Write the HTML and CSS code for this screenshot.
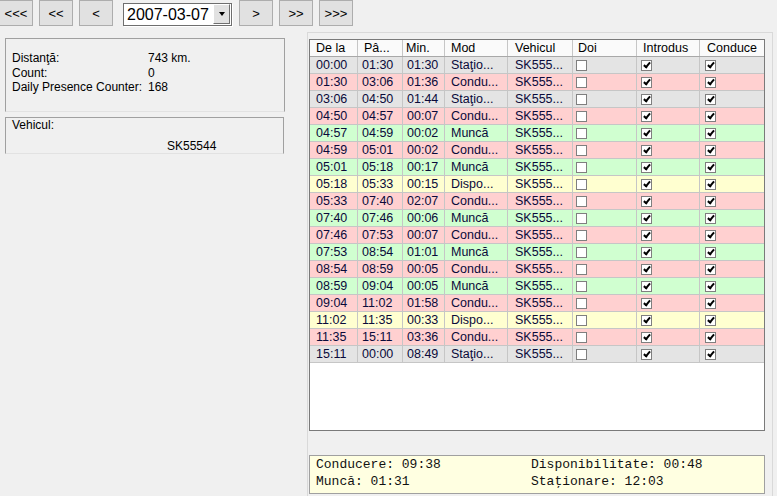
FILE: index.html
```html
<!DOCTYPE html>
<html>
<head>
<meta charset="utf-8">
<link rel="stylesheet" href="styles.css">
</head>
<body>
<div class="toolbar">
  <button class="nav first">&lt;&lt;&lt;</button>
  <button class="nav">&lt;&lt;</button>
  <button class="nav">&lt;</button>
  <div class="combo"><span class="combo-text">2007-03-07</span><span class="combo-btn"><span class="arrow"></span></span></div>
  <button class="nav">&gt;</button>
  <button class="nav">&gt;&gt;</button>
  <button class="nav">&gt;&gt;&gt;</button>
</div>
<div class="main">
  <div class="left">
    <div class="panel info">
      <span>Distanţă:</span><span>743 km.</span>
      <span>Count:</span><span>0</span>
      <span>Daily Presence Counter:</span><span>168</span>
    </div>
    <div class="panel vehicle">
      <div>Vehicul:</div>
      <div class="veh-value">SK55544</div>
    </div>
  </div>
  <div class="right">
    <div class="grid">
      <div class="row head"><div class="c">De la</div><div class="c">Pâ...</div><div class="c">Min.</div><div class="c">Mod</div><div class="c">Vehicul</div><div class="c">Doi</div><div class="c">Introdus</div><div class="c">Conduce</div></div>
      <div class="row st"><div class="c">00:00</div><div class="c">01:30</div><div class="c">01:30</div><div class="c">Staţio...</div><div class="c">SK555...</div><div class="c"><span class="cb"></span></div><div class="c"><span class="cb on"></span></div><div class="c"><span class="cb on"></span></div></div>
      <div class="row dr"><div class="c">01:30</div><div class="c">03:06</div><div class="c">01:36</div><div class="c">Condu...</div><div class="c">SK555...</div><div class="c"><span class="cb"></span></div><div class="c"><span class="cb on"></span></div><div class="c"><span class="cb on"></span></div></div>
      <div class="row st"><div class="c">03:06</div><div class="c">04:50</div><div class="c">01:44</div><div class="c">Staţio...</div><div class="c">SK555...</div><div class="c"><span class="cb"></span></div><div class="c"><span class="cb on"></span></div><div class="c"><span class="cb on"></span></div></div>
      <div class="row dr"><div class="c">04:50</div><div class="c">04:57</div><div class="c">00:07</div><div class="c">Condu...</div><div class="c">SK555...</div><div class="c"><span class="cb"></span></div><div class="c"><span class="cb on"></span></div><div class="c"><span class="cb on"></span></div></div>
      <div class="row wk"><div class="c">04:57</div><div class="c">04:59</div><div class="c">00:02</div><div class="c">Muncă</div><div class="c">SK555...</div><div class="c"><span class="cb"></span></div><div class="c"><span class="cb on"></span></div><div class="c"><span class="cb on"></span></div></div>
      <div class="row dr"><div class="c">04:59</div><div class="c">05:01</div><div class="c">00:02</div><div class="c">Condu...</div><div class="c">SK555...</div><div class="c"><span class="cb"></span></div><div class="c"><span class="cb on"></span></div><div class="c"><span class="cb on"></span></div></div>
      <div class="row wk"><div class="c">05:01</div><div class="c">05:18</div><div class="c">00:17</div><div class="c">Muncă</div><div class="c">SK555...</div><div class="c"><span class="cb"></span></div><div class="c"><span class="cb on"></span></div><div class="c"><span class="cb on"></span></div></div>
      <div class="row av"><div class="c">05:18</div><div class="c">05:33</div><div class="c">00:15</div><div class="c">Dispo...</div><div class="c">SK555...</div><div class="c"><span class="cb"></span></div><div class="c"><span class="cb on"></span></div><div class="c"><span class="cb on"></span></div></div>
      <div class="row dr"><div class="c">05:33</div><div class="c">07:40</div><div class="c">02:07</div><div class="c">Condu...</div><div class="c">SK555...</div><div class="c"><span class="cb"></span></div><div class="c"><span class="cb on"></span></div><div class="c"><span class="cb on"></span></div></div>
      <div class="row wk"><div class="c">07:40</div><div class="c">07:46</div><div class="c">00:06</div><div class="c">Muncă</div><div class="c">SK555...</div><div class="c"><span class="cb"></span></div><div class="c"><span class="cb on"></span></div><div class="c"><span class="cb on"></span></div></div>
      <div class="row dr"><div class="c">07:46</div><div class="c">07:53</div><div class="c">00:07</div><div class="c">Condu...</div><div class="c">SK555...</div><div class="c"><span class="cb"></span></div><div class="c"><span class="cb on"></span></div><div class="c"><span class="cb on"></span></div></div>
      <div class="row wk"><div class="c">07:53</div><div class="c">08:54</div><div class="c">01:01</div><div class="c">Muncă</div><div class="c">SK555...</div><div class="c"><span class="cb"></span></div><div class="c"><span class="cb on"></span></div><div class="c"><span class="cb on"></span></div></div>
      <div class="row dr"><div class="c">08:54</div><div class="c">08:59</div><div class="c">00:05</div><div class="c">Condu...</div><div class="c">SK555...</div><div class="c"><span class="cb"></span></div><div class="c"><span class="cb on"></span></div><div class="c"><span class="cb on"></span></div></div>
      <div class="row wk"><div class="c">08:59</div><div class="c">09:04</div><div class="c">00:05</div><div class="c">Muncă</div><div class="c">SK555...</div><div class="c"><span class="cb"></span></div><div class="c"><span class="cb on"></span></div><div class="c"><span class="cb on"></span></div></div>
      <div class="row dr"><div class="c">09:04</div><div class="c">11:02</div><div class="c">01:58</div><div class="c">Condu...</div><div class="c">SK555...</div><div class="c"><span class="cb"></span></div><div class="c"><span class="cb on"></span></div><div class="c"><span class="cb on"></span></div></div>
      <div class="row av"><div class="c">11:02</div><div class="c">11:35</div><div class="c">00:33</div><div class="c">Dispo...</div><div class="c">SK555...</div><div class="c"><span class="cb"></span></div><div class="c"><span class="cb on"></span></div><div class="c"><span class="cb on"></span></div></div>
      <div class="row dr"><div class="c">11:35</div><div class="c">15:11</div><div class="c">03:36</div><div class="c">Condu...</div><div class="c">SK555...</div><div class="c"><span class="cb"></span></div><div class="c"><span class="cb on"></span></div><div class="c"><span class="cb on"></span></div></div>
      <div class="row st"><div class="c">15:11</div><div class="c">00:00</div><div class="c">08:49</div><div class="c">Staţio...</div><div class="c">SK555...</div><div class="c"><span class="cb"></span></div><div class="c"><span class="cb on"></span></div><div class="c"><span class="cb on"></span></div></div>
    </div>
    <div class="summary">
      <span>Conducere: 09:38</span><span>Disponibilitate: 00:48</span>
      <span>Muncă: 01:31</span><span>Staţionare: 12:03</span>
    </div>
  </div>
</div>
</body>
</html>
```
FILE: styles.css
```css
html, body {
  margin: 0;
  padding: 0;
}
body {
  width: 777px;
  height: 496px;
  overflow: hidden;
  background: #f0f0f0;
  font-family: "Liberation Sans", Arial, sans-serif;
  font-size: 12.5px;
  color: #000;
}

/* toolbar */
.toolbar {
  display: flex;
  align-items: flex-start;
  height: 26px;
}
.nav {
  box-sizing: border-box;
  width: 34px;
  height: 26px;
  margin: 0 6px 0 0;
  padding: 0;
  border: 1px solid #adadad;
  background: #e1e1e1;
  font-family: "Liberation Sans", Arial, sans-serif;
  font-size: 13px;
  color: #000;
}
.nav.first {
  margin-left: -1px;
}
.combo {
  box-sizing: border-box;
  width: 109px;
  height: 23px;
  margin: 3px 7px 0 4px;
  border: 1px solid #6e6e6e;
  box-shadow: 1px 1px 0 #ffffff;
  background: #fff;
  display: flex;
  align-items: flex-start;
  justify-content: space-between;
  padding: 0 1px 0 0;
}
.combo-text {
  font-size: 16px;
  line-height: 21px;
  padding-left: 3px;
  color: #000;
}
.combo-btn {
  box-sizing: border-box;
  width: 17px;
  height: 20px;
  background: #e1e1e1;
  border-top: 1px solid #fff;
  border-left: 1px solid #fff;
  border-right: 1px solid #6e6e6e;
  border-bottom: 1px solid #6e6e6e;
  display: flex;
  align-items: center;
  justify-content: center;
}
.arrow {
  width: 0;
  height: 0;
  border-top: 4px solid #000;
  border-left: 3.5px solid transparent;
  border-right: 3.5px solid transparent;
}

/* main */
.main {
  display: flex;
  align-items: flex-start;
}
.left {
  box-sizing: border-box;
  width: 285px;
  padding: 12px 0 0 5px;
  font-size: 12px;
}
.panel {
  box-sizing: border-box;
  width: 280px;
  border: 1px solid #a0a0a0;
  border-bottom-color: #e2e2e2;
}
.info {
  height: 74px;
  padding: 12px 0 0 6px;
  display: grid;
  grid-template-columns: 136px 1fr;
  grid-auto-rows: 14.5px;
  line-height: 14.5px;
  align-content: start;
}
.vehicle {
  width: 279px;
  height: 37px;
  margin-top: 5px;
  padding: 0 0 0 6px;
  line-height: 14.5px;
}
.veh-value {
  margin-top: 6px;
  padding-left: 155px;
}

.right {
  box-sizing: border-box;
  width: 466px;
  height: 470px;
  margin: 6px 0 0 22px;
  border: 1px solid #d9d9d9;
  border-bottom: none;
  padding: 6px 0 0 1px;
}

/* grid */
.grid {
  box-sizing: border-box;
  width: 456px;
  height: 392px;
  border: 1px solid #7a7a7a;
  background: #fff;
  color: #0a0a3a;
}
.row {
  box-sizing: border-box;
  display: grid;
  grid-template-columns: 48px 45px 42px 63px 65px 64px 63px 64px;
  height: 17px;
  border-bottom: 1px solid #c6c6c6;
}
.row.head {
  background: #fafafa;
  border-bottom-color: #a8a8a8;
  color: #000;
}
.c {
  box-sizing: border-box;
  border-right: 1px solid #c6c6c6;
  line-height: 16px;
  white-space: nowrap;
  overflow: hidden;
  display: flex;
  align-items: center;
}
.c:last-child {
  border-right: none;
}
.row .c:nth-child(1) { padding-left: 6px; }
.row .c:nth-child(2) { padding-left: 4px; }
.row .c:nth-child(3) { padding-left: 4px; }
.row .c:nth-child(4) { padding-left: 6px; }
.row .c:nth-child(5) { padding-left: 7px; }
.row .c:nth-child(6) { padding-left: 3px; }
.row .c:nth-child(7) { padding-left: 4px; }
.row .c:nth-child(8) { padding-left: 5px; }
.row.head .c:nth-child(2) { padding-left: 6px; }
.row.head .c:nth-child(3) { padding-left: 3px; }
.row.head .c:nth-child(5) { padding-left: 7px; }
.row.head .c:nth-child(6) { padding-left: 5px; }
.row.head .c:nth-child(7) { padding-left: 6px; }
.row.head .c:nth-child(8) { padding-left: 7px; }

.st { background: #e4e4e4; }
.dr { background: #ffd0d0; }
.wk { background: #d0ffd0; }
.av { background: #ffffd0; }

.cb {
  box-sizing: border-box;
  position: relative;
  width: 11px;
  height: 11px;
  border: 1px solid #7f7f7f;
  background: #fff;
}
.cb.on::after {
  content: "";
  position: absolute;
  left: 2.5px;
  top: 0px;
  width: 2px;
  height: 5px;
  border-right: 2px solid #000;
  border-bottom: 2px solid #000;
  transform: rotate(40deg);
}

/* summary */
.summary {
  box-sizing: border-box;
  width: 456px;
  height: 39px;
  margin-top: 24px;
  border: 1px solid #a0a0a0;
  background: #ffffe1;
  padding: 0 0 0 6px;
  display: grid;
  grid-template-columns: 215px 1fr;
  grid-auto-rows: 17px;
  line-height: 17px;
  font-family: "Liberation Mono", "Courier New", monospace;
  font-size: 13px;
  color: #111;
}
```
